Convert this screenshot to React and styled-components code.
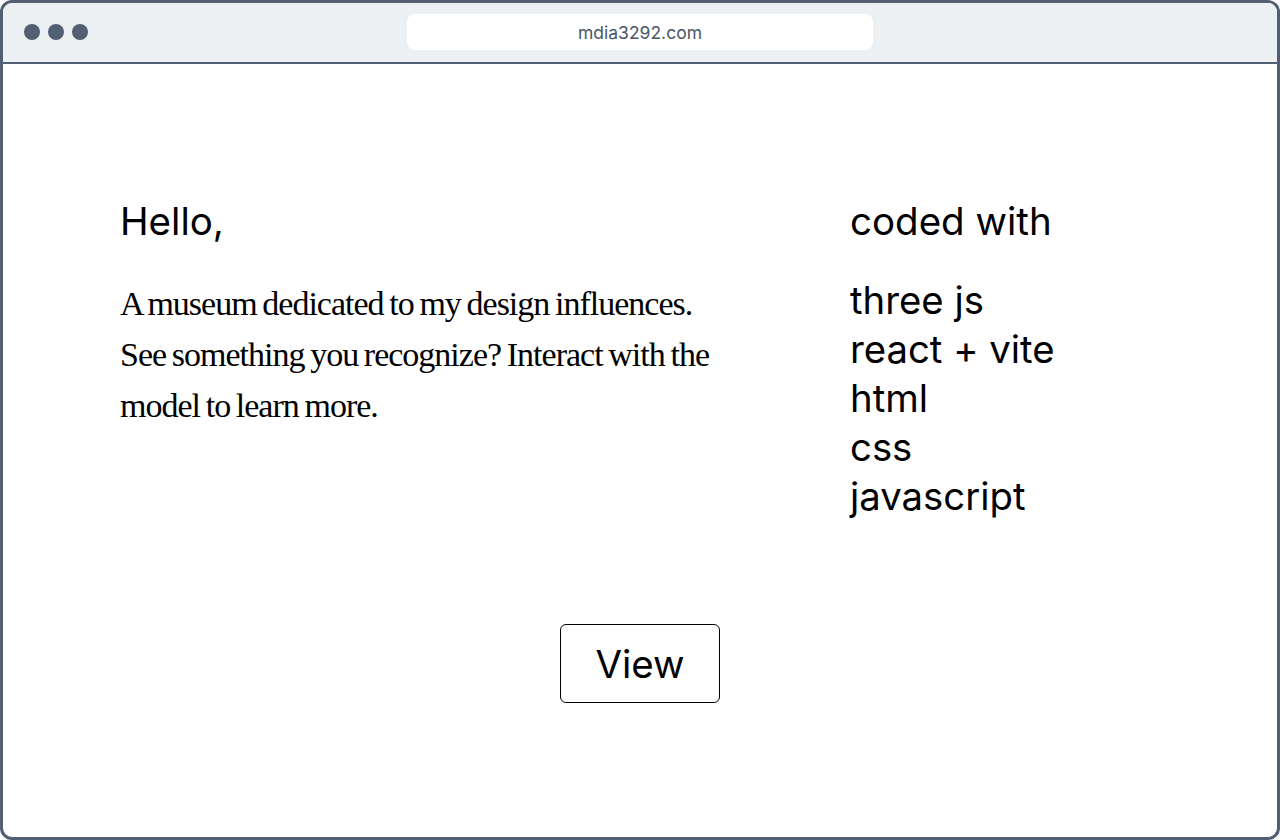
import styled, { createGlobalStyle } from 'styled-components';

const GlobalStyle = createGlobalStyle`
  html, body {
    margin: 0;
    padding: 0;
    background: #fff;
  }
  * {
    box-sizing: border-box;
  }
`;

const stack = ['three js', 'react + vite', 'html', 'css', 'javascript'];

export default function App() {
  return (
    <>
      <GlobalStyle />
      <Frame>
        <TopBar>
          <Dots>
            <Dot />
            <Dot />
            <Dot />
          </Dots>
          <UrlBar>mdia3292.com</UrlBar>
        </TopBar>
        <Page>
          <Hero>
            <Intro>
              <Greeting>Hello,</Greeting>
              <Blurb>
                A museum dedicated to my design influences.
                <br />
                See something you recognize? Interact with the
                <br />
                model to learn more.
              </Blurb>
            </Intro>
            <Credits>
              <Greeting>coded with</Greeting>
              <StackList>
                {stack.map((item) => (
                  <StackItem key={item}>{item}</StackItem>
                ))}
              </StackList>
            </Credits>
          </Hero>
          <ViewButton>View</ViewButton>
        </Page>
      </Frame>
    </>
  );
}

const Frame = styled.div`
  width: 1280px;
  height: 840px;
  border: 3px solid #525e71;
  border-radius: 12px;
  overflow: hidden;
  display: flex;
  flex-direction: column;
  font-family: Inter, 'Liberation Sans', sans-serif;
`;
const TopBar = styled.div`
  height: 61px;
  flex-shrink: 0;
  background: #edf0f3;
  border-bottom: 2px solid #525e71;
  display: flex;
  align-items: center;
  padding-left: 21px;
  position: relative;
`;
const Dots = styled.div`
  display: flex;
  gap: 8px;
  margin-top: -2px;
`;
const Dot = styled.span`
  width: 16px;
  height: 16px;
  border-radius: 50%;
  background: #525e71;
`;
const UrlBar = styled.div`
  position: absolute;
  left: 404px;
  top: 11px;
  width: 466px;
  height: 36px;
  background: #fff;
  border-radius: 8px;
  display: flex;
  align-items: center;
  justify-content: center;
  font-size: 17.5px;
  color: #4a5568;
`;
const Page = styled.div`
  flex: 1;
  display: flex;
  flex-direction: column;
  padding: 134px 0 0 117px;
`;
const Hero = styled.div`
  display: grid;
  grid-template-columns: 730px 1fr;
`;
const Intro = styled.div``;
const Greeting = styled.h1`
  margin: 0;
  font-size: 38.5px;
  font-weight: 400;
  line-height: 47px;
  color: #000;
`;
const Blurb = styled.p`
  margin: 33px 0 0;
  font-family: 'Liberation Serif', serif;
  font-size: 34px;
  line-height: 51px;
  letter-spacing: -1px;
  word-spacing: -1.8px;
  white-space: nowrap;
  color: #000;
`;
const Credits = styled.div``;
const StackList = styled.ul`
  list-style: none;
  margin: 31px 0 0;
  padding: 0;
`;
const StackItem = styled.li`
  font-size: 38.3px;
  line-height: 49px;
  color: #000;
`;
const ViewButton = styled.button`
  align-self: center;
  margin: 103px 0 0 -117px;
  width: 160px;
  height: 79px;
  border: 1px solid #000;
  border-radius: 6px;
  background: #fff;
  font-family: Inter, 'Liberation Sans', sans-serif;
  font-size: 38.5px;
  color: #000;
  cursor: pointer;
`;
